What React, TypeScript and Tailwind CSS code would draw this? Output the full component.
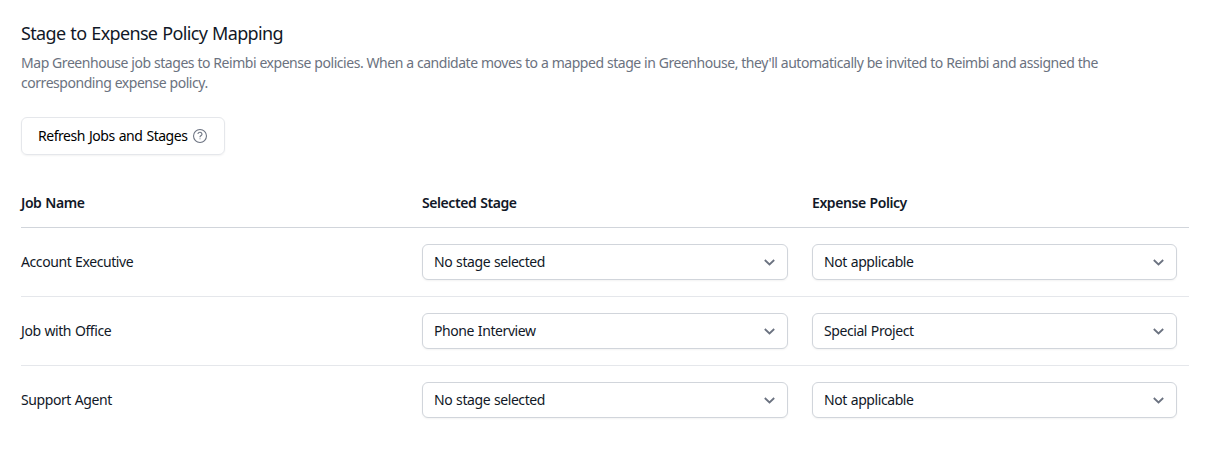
const jobs = [
  { name: "Account Executive", stage: "No stage selected", policy: "Not applicable" },
  { name: "Job with Office", stage: "Phone Interview", policy: "Special Project" },
  { name: "Support Agent", stage: "No stage selected", policy: "Not applicable" },
];

function SelectBox({ value }: { value: string }) {
  return (
    <button
      type="button"
      className="flex h-9 w-full items-center justify-between rounded-md border border-[#d1d5db] bg-white pr-2 pl-[11px] text-left tracking-[-0.42px] shadow-xs [word-spacing:0.6px]"
    >
      <span>{value}</span>
      <svg className="h-5 w-5 text-[#6b7280]" fill="none" viewBox="0 0 20 20" stroke="currentColor">
        <path strokeWidth="1.8" d="M5.8 8l4.7 4.4L15.2 8" />
      </svg>
    </button>
  );
}

function HelpIcon() {
  return (
    <svg className="ml-[5px] h-4 w-4 shrink-0 text-[#6b7280]" fill="none" viewBox="0 0 24 24" stroke="currentColor" strokeWidth="1.6" strokeLinecap="round">
      <circle cx="12" cy="12" r="9.7" />
      <path d="M9 8.3a3.1 3.1 0 0 1 6 .9c0 2.1-3 2.7-3 4.1M12 16.2h.01" />
    </svg>
  );
}

export default function App() {
  return (
    <div className="min-h-[450px] bg-white pt-[19px] pr-5 pl-[21px] font-['Noto_Sans',sans-serif] text-sm text-[#111827]">
      <h3 className="text-lg leading-7 tracking-[-0.66px] [word-spacing:0.9px]">Stage to Expense Policy Mapping</h3>
      <p className="mt-1.5 max-w-[1120px] leading-5 tracking-[-0.46px] text-[#6b7280] [word-spacing:0.15px]">
        Map Greenhouse job stages to Reimbi expense policies. When a candidate moves to a mapped stage in Greenhouse, they'll automatically be invited to Reimbi and assigned the corresponding expense policy.
      </p>
      <button
        type="button"
        className="mt-6 flex h-[38px] w-[204px] items-center rounded-md border border-[#e5e7eb] px-4 tracking-[-0.46px] whitespace-nowrap text-black shadow-xs [word-spacing:0.8px]"
      >
        Refresh Jobs and Stages
        <HelpIcon />
      </button>
      <table className="mt-6 w-full table-fixed text-left tracking-[-0.42px] [word-spacing:0.6px]">
        <colgroup>
          <col className="w-[389px]" />
          <col className="w-[390px]" />
          <col />
        </colgroup>
        <thead>
          <tr className="h-12 border-b border-[#d1d5db]">
            <th className="pr-3 font-semibold">Job Name</th>
            <th className="px-3 font-semibold">Selected Stage</th>
            <th className="px-3 font-semibold">Expense Policy</th>
          </tr>
        </thead>
        <tbody className="divide-y divide-[#e5e7eb]">
          {jobs.map((job) => (
            <tr key={job.name} className="h-[69px]">
              <td className="pr-3">{job.name}</td>
              <td className="px-3">
                <SelectBox value={job.stage} />
              </td>
              <td className="px-3">
                <SelectBox value={job.policy} />
              </td>
            </tr>
          ))}
        </tbody>
      </table>
    </div>
  );
}
